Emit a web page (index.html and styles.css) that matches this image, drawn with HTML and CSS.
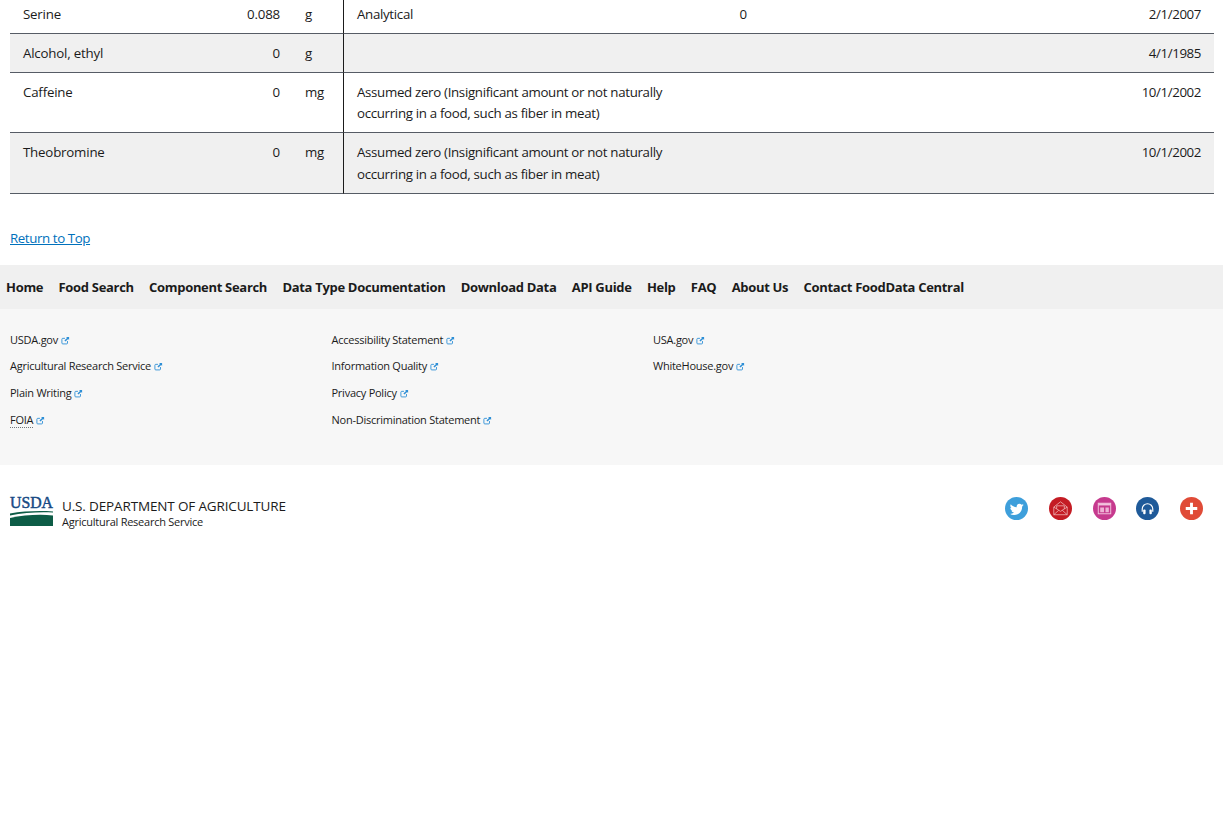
FILE: index.html
```html
<!DOCTYPE html>
<html lang="en">
<head>
<meta charset="utf-8">
<title>FoodData Central</title>
<link rel="stylesheet" href="styles.css">
</head>
<body>
<svg class="defs" width="0" height="0" aria-hidden="true">
  <symbol id="ext" viewBox="0 0 10 10">
    <path d="M7.2 5.6v2.2a1 1 0 0 1-1 1H2a1 1 0 0 1-1-1V3.6a1 1 0 0 1 1-1h2.4" fill="none" stroke="currentColor" stroke-width="1"/>
    <path d="M5.6 1h3.4v3.4L7.9 3.3 5 6.2 3.800 5l2.900-2.900z" fill="currentColor"/>
  </symbol>
</svg>
<main class="content">
  <table class="nutrients">
    <colgroup>
      <col class="c-name"><col class="c-amount"><col class="c-unit"><col class="c-note"><col class="c-min"><col class="c-date">
    </colgroup>
    <tbody>
      <tr class="first">
        <td>Serine</td><td class="num">0.088</td><td class="unit">g</td><td class="note">Analytical</td><td class="num">0</td><td class="num date">2/1/2007</td>
      </tr>
      <tr class="alt">
        <td>Alcohol, ethyl</td><td class="num">0</td><td class="unit">g</td><td class="note"></td><td class="num"></td><td class="num date">4/1/1985</td>
      </tr>
      <tr>
        <td>Caffeine</td><td class="num">0</td><td class="unit">mg</td><td class="note">Assumed zero (Insignificant amount or not naturally occurring in a food, such as fiber in meat)</td><td class="num"></td><td class="num date">10/1/2002</td>
      </tr>
      <tr class="alt">
        <td>Theobromine</td><td class="num">0</td><td class="unit">mg</td><td class="note">Assumed zero (Insignificant amount or not naturally occurring in a food, such as fiber in meat)</td><td class="num"></td><td class="num date">10/1/2002</td>
      </tr>
    </tbody>
  </table>
  <p class="return"><a href="#top">Return to Top</a></p>
</main>
<footer>
  <nav class="site-nav">
    <a href="#">Home</a><a href="#">Food Search</a><a href="#">Component Search</a><a href="#">Data Type Documentation</a><a href="#">Download Data</a><a href="#">API Guide</a><a href="#">Help</a><a href="#">FAQ</a><a href="#">About Us</a><a href="#">Contact FoodData Central</a>
  </nav>
  <div class="links">
    <ul>
      <li><a href="#">USDA.gov</a><svg class="ext"><use href="#ext"/></svg></li>
      <li><a href="#">Agricultural Research Service</a><svg class="ext"><use href="#ext"/></svg></li>
      <li><a href="#">Plain Writing</a><svg class="ext"><use href="#ext"/></svg></li>
      <li><a href="#"><abbr title="Freedom of Information Act">FOIA</abbr></a><svg class="ext"><use href="#ext"/></svg></li>
    </ul>
    <ul>
      <li><a href="#">Accessibility Statement</a><svg class="ext"><use href="#ext"/></svg></li>
      <li><a href="#">Information Quality</a><svg class="ext"><use href="#ext"/></svg></li>
      <li><a href="#">Privacy Policy</a><svg class="ext"><use href="#ext"/></svg></li>
      <li><a href="#">Non-Discrimination Statement</a><svg class="ext"><use href="#ext"/></svg></li>
    </ul>
    <ul>
      <li><a href="#">USA.gov</a><svg class="ext"><use href="#ext"/></svg></li>
      <li><a href="#">WhiteHouse.gov</a><svg class="ext"><use href="#ext"/></svg></li>
    </ul>
  </div>
  <div class="identity">
    <div class="agency">
      <svg class="logo" viewBox="0 0 43 30" width="43" height="30" role="img" aria-label="USDA">
        <text x="0" y="12" class="logo-text" textLength="43" lengthAdjust="spacingAndGlyphs">USDA</text>
        <path d="M0 17.500C14 15 30 14.500 43 15.500v1C30 15.800 14 16.500 0 19.500z" fill="#0d5c46"/>
        <path d="M0 22C14 19 30 18 43 19.500V30H0z" fill="#0d5c46"/>
      </svg>
      <div class="agency-text">
        <div class="dept">U.S. DEPARTMENT OF AGRICULTURE</div>
        <div class="ars">Agricultural Research Service</div>
      </div>
    </div>
    <div class="social">
      <span class="circle twitter"><svg viewBox="0 0 24 24"><path d="M19.600 8.400c-.5.2-1.100.4-1.700.5.6-.4 1.100-1 1.300-1.700-.6.4-1.200.6-1.900.8a3 3 0 0 0-5.100 2.700c-2.500-.1-4.700-1.300-6.200-3.100-.8 1.400-.4 3.100.9 4-.5 0-1-.1-1.400-.4 0 1.500 1 2.700 2.400 3-.4.1-.9.1-1.300 0 .4 1.200 1.500 2.100 2.800 2.100-1.300 1-2.900 1.400-4.400 1.300 4.400 2.800 12.900 1.100 12.900-7.800.7-.5 1.200-1 1.700-1.700z" fill="#fff"/></svg></span>
      <span class="circle mail"><svg viewBox="0 0 24 24" fill="none" stroke="#efb9b9" stroke-width="0.8"><path d="M5 10.500 12 5l7 5.500V18.500H5z"/><path d="M5 10.500 12 15l7-4.500M5 18.500l5.200-4.700M19 18.500l-5.200-4.700"/><path d="M8 12.500V9.200h8v3.300"/></svg></span>
      <span class="circle news"><svg viewBox="0 0 24 24"><rect x="5.500" y="6.500" width="13" height="11" fill="none" stroke="#f2c3de" stroke-width="1"/><path d="M5.500 6.500h13v2.300h-13z" fill="#f2c3de"/><path d="M7.500 11h4v5h-4zM13 11h3.500v5H13z" fill="#eeb2d5"/></svg></span>
      <span class="circle audio"><svg viewBox="0 0 24 24"><path d="M6.500 15.500v-3a5.500 5.500 0 0 1 11 0v3" fill="none" stroke="#fff" stroke-width="1.200"/><rect x="7.500" y="13" width="2.500" height="5" rx="1" fill="#fff"/><rect x="14" y="13" width="2.500" height="5" rx="1" fill="#fff"/></svg></span>
      <span class="circle plus"><svg viewBox="0 0 24 24"><path d="M10.500 6h3v4.500H18v3h-4.500V18h-3v-4.500H6v-3h4.500z" fill="#fff"/></svg></span>
    </div>
  </div>
</footer>
</body>
</html>
```

FILE: styles.css
```css
* { box-sizing: border-box; }
html, body { margin: 0; padding: 0; background: #fff; }
body {
  font-family: "Open Sans", "Liberation Sans", sans-serif;
  font-size: 13.3px;
  letter-spacing: -0.2px;
  line-height: 21.8px;
  color: #1b1b1b;
}
.defs { position: absolute; }
.content { padding: 0 9px 0 10px; }
.nutrients {
  width: 100%;
  border-collapse: separate;
  border-spacing: 0;
  table-layout: fixed;
}
.c-name { width: 200px; }
.c-amount { width: 83px; }
.c-unit { width: 51px; }
.c-note { width: 355px; }
.c-min { width: 61px; }
.nutrients td {
  padding: 9px 13px 7px;
  vertical-align: top;
  border-bottom: 1px solid #565c65;
}
.nutrients .first td { padding-top: 4px; }
.nutrients td:nth-child(3) { border-right: 1px solid #1b1b1b; }
.nutrients .alt td { background: #f0f0f0; }
.nutrients .num { text-align: right; }
.nutrients .date { letter-spacing: -0.4px; }
.nutrients .note { letter-spacing: -0.32px; }
.nutrients .unit { padding-left: 12px; padding-right: 0; }
.return { margin: 34px 0 0; height: 37px; letter-spacing: -0.4px; }
.return a { color: #0071bc; text-decoration: underline; }
.site-nav {
  display: flex;
  gap: 15.3px;
  align-items: center;
  height: 44px;
  padding: 2px 0 0 6px;
  background: #f0f0f0;
  font-size: 13px;
  letter-spacing: -0.31px;
}
.site-nav a { color: #1b1b1b; font-weight: 700; text-decoration: none; }
.links {
  display: grid;
  grid-template-columns: repeat(3, 321.5px);
  height: 156px;
  padding: 18px 0 0 10px;
  background: #f7f7f7;
  font-size: 11px;
  letter-spacing: -0.25px;
}
.links ul { margin: 0; padding: 0; list-style: none; }
.links li { height: 26.7px; line-height: 26px; white-space: nowrap; }
.links a { color: #1b1b1b; text-decoration: none; }
abbr { text-decoration: none; border-bottom: 1px dotted #71767a; }
.ext { width: 9px; height: 9px; margin-left: 3px; vertical-align: -1px; color: #2e8fd6; }
.identity {
  display: flex;
  justify-content: space-between;
  align-items: flex-start;
  padding: 31px 20px 0 10px;
}
.agency { display: flex; gap: 9px; align-items: flex-start; }
.logo { display: block; overflow: visible; }
.logo-text { font-family: "Liberation Serif", serif; font-size: 17px; letter-spacing: 0; fill: #174a84; stroke: #174a84; stroke-width: 0.5px; }
.agency-text { padding-top: 1px; }
.dept { font-size: 13.5px; letter-spacing: -0.15px; line-height: 18px; color: #1b1b1b; }
.ars { font-size: 11px; letter-spacing: -0.25px; line-height: 14px; color: #1b1b1b; }
.social { display: flex; gap: 20.7px; margin-top: 1px; }
.circle { display: block; width: 23px; height: 23px; border-radius: 50%; }
.circle svg { display: block; width: 23px; height: 23px; }
.twitter { background: #3e9fdb; }
.mail { background: #c41c24; }
.news { background: #c63a8e; }
.audio { background: #1f5a99; }
.plus { background: #e04b37; }
```
